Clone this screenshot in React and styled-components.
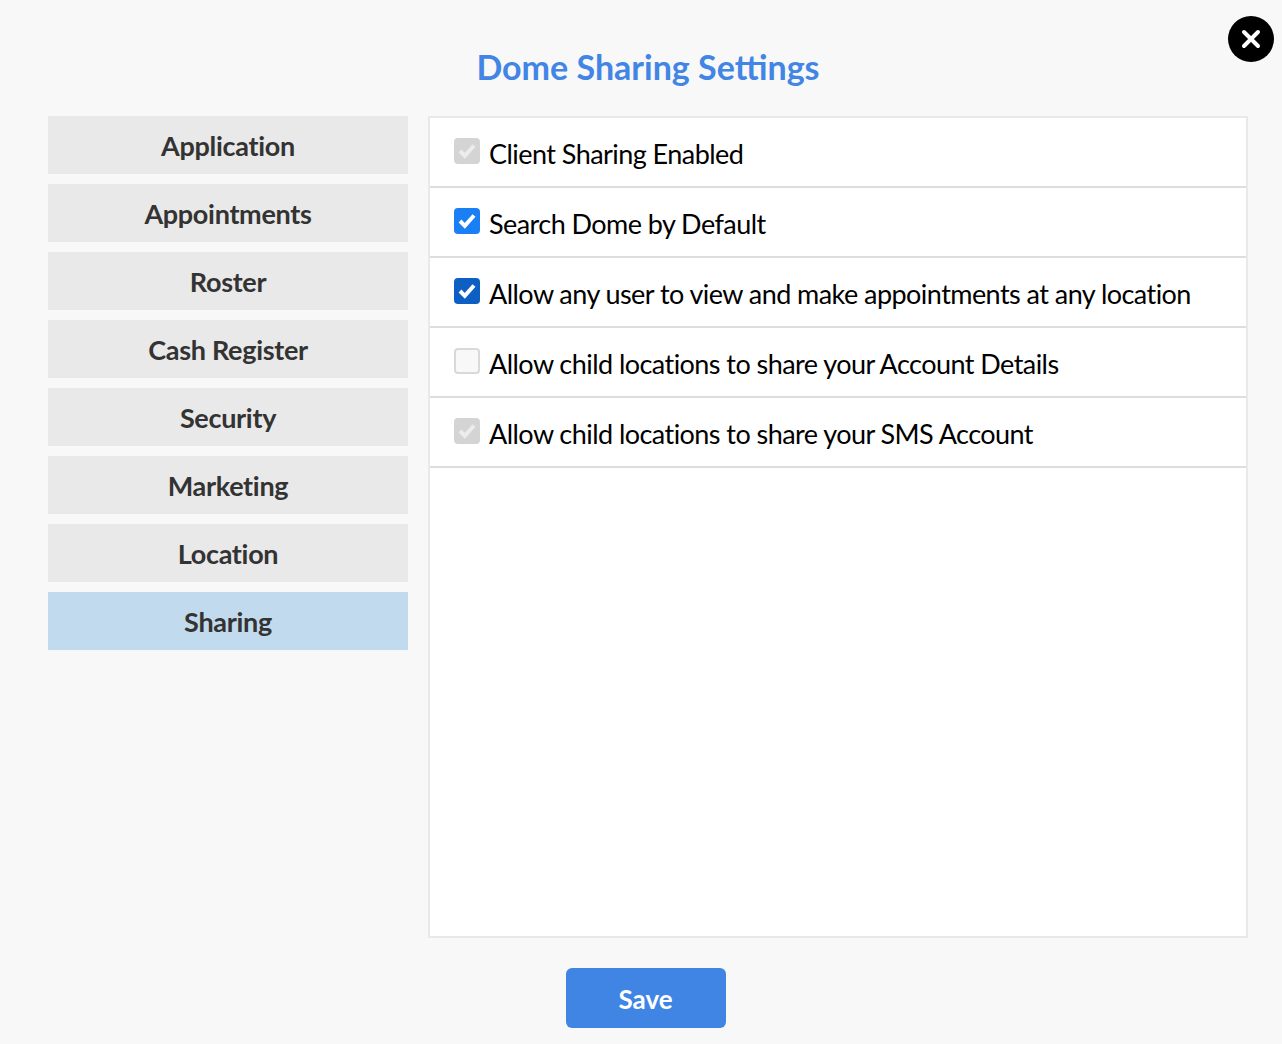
import React from "react";
import styled, { createGlobalStyle } from "styled-components";

const tabs = ["Application", "Appointments", "Roster", "Cash Register", "Security", "Marketing", "Location", "Sharing"];

const options = [
    { label: "Client Sharing Enabled", state: "disabled" },
    { label: "Search Dome by Default", state: "checked" },
    { label: "Allow any user to view and make appointments at any location", state: "dark" },
    { label: "Allow child locations to share your Account Details", state: "empty" },
    { label: "Allow child locations to share your SMS Account", state: "disabled" },
];

const App = () => {
    return (
        <Page>
            <GlobalStyle />
            <CloseButton aria-label="Close">
                <svg width="20" height="20" viewBox="0 0 20 20">
                    <path d="M3 3L17 17M17 3L3 17" stroke="#fff" strokeWidth="4" strokeLinecap="round" />
                </svg>
            </CloseButton>
            <Title>Dome Sharing Settings</Title>
            <Body>
                <Sidebar>
                    {tabs.map((tab) => (
                        <Tab key={tab} $active={tab === "Sharing"}>
                            {tab}
                        </Tab>
                    ))}
                </Sidebar>
                <Panel>
                    {options.map((option) => (
                        <Row key={option.label}>
                            <Check $state={option.state}>
                                {option.state !== "empty" && (
                                    <svg width="26" height="26" viewBox="0 0 26 26">
                                        <path
                                            d="M6 13L10.8 17.8L20 7.5"
                                            fill="none"
                                            stroke={option.state === "disabled" ? "#ececec" : "#fff"}
                                            strokeWidth="4"
                                        />
                                    </svg>
                                )}
                            </Check>
                            <RowLabel>{option.label}</RowLabel>
                        </Row>
                    ))}
                </Panel>
            </Body>
            <Footer>
                <SaveButton>Save</SaveButton>
            </Footer>
        </Page>
    );
};

const GlobalStyle = createGlobalStyle`
    html, body {
        margin: 0;
        padding: 0;
        background: #f8f8f8;
    }
`;

const Page = styled.div`
    position: relative;
    height: 1044px;
    box-sizing: border-box;
    padding: 0 34px 0 48px;
    font-family: Lato, "Liberation Sans", sans-serif;
    overflow: hidden;
`;

const CloseButton = styled.button`
    position: absolute;
    top: 16px;
    right: 8px;
    width: 46px;
    height: 46px;
    padding: 0;
    border: 0;
    border-radius: 50%;
    background: #000;
    display: flex;
    align-items: center;
    justify-content: center;
`;

const Title = styled.h1`
    margin: 0;
    height: 116px;
    box-sizing: border-box;
    padding: 45px 0 0 0;
    text-align: center;
    font-size: 34px;
    line-height: 44px;
    font-weight: 700;
    color: #4285e4;
`;

const Body = styled.div`
    display: flex;
    gap: 20px;
`;

const Sidebar = styled.div`
    width: 360px;
    flex: none;
    display: flex;
    flex-direction: column;
    gap: 10px;
`;

const Tab = styled.div`
    height: 58px;
    display: flex;
    align-items: center;
    justify-content: center;
    box-sizing: border-box;
    font-size: 27px;
    font-weight: 700;
    letter-spacing: -0.3px;
    color: #333;
    background: ${(p) => (p.$active ? "#c2daee" : "#e9e9e9")};
`;

const Panel = styled.div`
    flex: 1;
    height: 822px;
    box-sizing: border-box;
    border: 2px solid #e9e9e9;
    background: #fff;
`;

const Row = styled.div`
    height: 70px;
    box-sizing: border-box;
    border-bottom: 2px solid #ddd;
    display: flex;
    align-items: center;
    padding-left: 24px;
    gap: 9px;
`;

const Check = styled.span`
    width: 26px;
    height: 26px;
    margin-top: -2px;
    flex: none;
    box-sizing: border-box;
    border-radius: 4px;
    display: block;
    background: ${(p) =>
        p.$state === "checked" ? "#1a7ef5" : p.$state === "dark" ? "#0e5fc4" : p.$state === "disabled" ? "#d4d4d4" : "#f8f8f8"};
    border: ${(p) => (p.$state === "empty" ? "2px solid #d9d9d9" : "none")};
    svg {
        display: block;
    }
`;

const RowLabel = styled.span`
    font-size: 27px;
    letter-spacing: -0.55px;
    color: #000;
    margin-top: 2px;
`;

const Footer = styled.div`
    display: flex;
    justify-content: center;
    padding: 30px 0 0 0;
    margin-right: 5px;
`;

const SaveButton = styled.button`
    width: 160px;
    height: 60px;
    padding: 2px 0 0 0;
    border: 0;
    border-radius: 6px;
    background: #4085e3;
    color: #fff;
    font-family: inherit;
    font-size: 26px;
    font-weight: 700;
`;

export default App;
